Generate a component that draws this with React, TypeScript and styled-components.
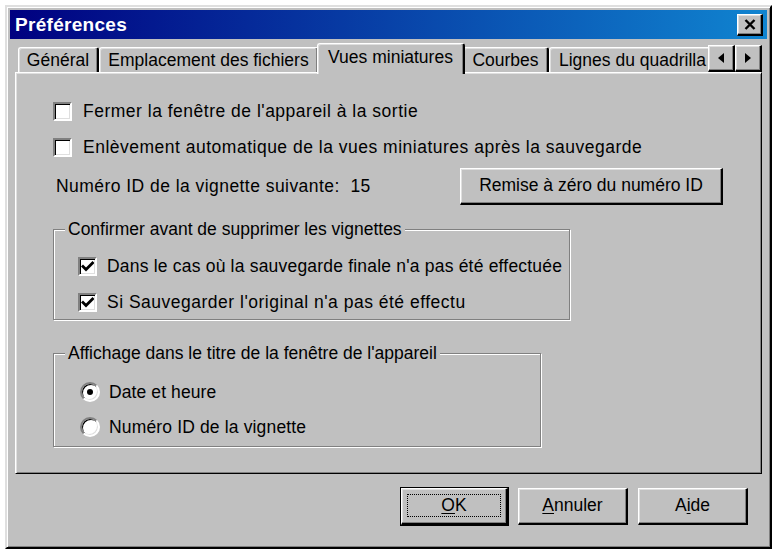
import styled, { createGlobalStyle } from 'styled-components';

const GlobalStyle = createGlobalStyle`
  html, body {
    margin: 0;
    padding: 0;
    background: #fff;
  }
  body {
    font-family: "Liberation Sans", Arial, sans-serif;
    font-size: 17.5px;
    color: #000;
  }
`;

const tabs = [
  { label: 'Général', width: 81 },
  { label: 'Emplacement des fichiers', width: 220 },
  { label: 'Vues miniatures', width: 144, active: true },
  { label: 'Courbes', width: 86 },
  { label: 'Lignes du quadrilla', width: 200, clipped: true },
];

function CheckBox({ checked }: { checked?: boolean }) {
  return (
    <Box>
      {checked && (
        <svg width="13" height="13" viewBox="0 0 13 13">
          <path d="M2 6.5 L5 9.5 L11.5 3" stroke="#000" strokeWidth="2.8" fill="none" strokeLinecap="square" />
        </svg>
      )}
    </Box>
  );
}

function Radio({ checked }: { checked?: boolean }) {
  return <RadioCircle>{checked && <RadioDot />}</RadioCircle>;
}

function App() {
  return (
    <>
      <GlobalStyle />
      <Window>
        <TitleBar>
          <Title>Préférences</Title>
          <CloseButton>
            <svg width="12" height="11" viewBox="0 0 12 11">
              <path d="M1.5 1 L10.5 10 M10.5 1 L1.5 10" stroke="#000" strokeWidth="2.4" />
            </svg>
          </CloseButton>
        </TitleBar>

        <Body>
          <TabStrip>
            <TabList>
              {tabs.map((t) => (
                <Tab key={t.label} $width={t.width} $active={t.active} $clipped={t.clipped}>
                  {t.label}
                </Tab>
              ))}
            </TabList>
            <Arrows>
              <ArrowButton>
                <svg width="6" height="10" viewBox="0 0 6 10">
                  <polygon points="6,0 6,10 0,5" fill="#000" />
                </svg>
              </ArrowButton>
              <ArrowButton>
                <svg width="6" height="10" viewBox="0 0 6 10">
                  <polygon points="0,0 0,10 6,5" fill="#000" />
                </svg>
              </ArrowButton>
            </Arrows>
          </TabStrip>

          <Panel>
            <OptionRow $gap={11}>
              <CheckBox />
              <Label>Fermer la fenêtre de l'appareil à la sortie</Label>
            </OptionRow>
            <OptionRow $gap={11}>
              <CheckBox />
              <Label>Enlèvement automatique de la vues miniatures après la sauvegarde</Label>
            </OptionRow>
            <IdRow>
              <IdLabel>Numéro ID de la vignette suivante:&nbsp;&nbsp;15</IdLabel>
              <Button $width={263}>Remise à zéro du numéro ID</Button>
            </IdRow>

            <GroupBox $width={517} $top={14}>
              <Legend>Confirmer avant de supprimer les vignettes</Legend>
              <GroupBody $pad="9px 0 0 24px" $gap={2}>
                <OptionRow $gap={10} $h={34}>
                  <CheckBox checked />
                  <Label $spacing={0.2}>Dans le cas où la sauvegarde finale n'a pas été effectuée</Label>
                </OptionRow>
                <OptionRow $gap={10} $h={34}>
                  <CheckBox checked />
                  <Label>Si Sauvegarder l'original n'a pas été effectu</Label>
                </OptionRow>
              </GroupBody>
            </GroupBox>

            <GroupBox $width={488} $top={23}>
              <Legend>Affichage dans le titre de la fenêtre de l'appareil</Legend>
              <GroupBody $pad="11px 0 2px 26px" $gap={1}>
                <OptionRow $gap={9} $h={34}>
                  <Radio checked />
                  <Label $spacing={0.1}>Date et heure</Label>
                </OptionRow>
                <OptionRow $gap={9} $h={34}>
                  <Radio />
                  <Label $spacing={0.15}>Numéro ID de la vignette</Label>
                </OptionRow>
              </GroupBody>
            </GroupBox>
          </Panel>

          <Footer>
            <DefaultButton $width={107}>
              <FocusRing>
                <Mnemonic>O</Mnemonic>K
              </FocusRing>
            </DefaultButton>
            <Button $width={110}>
              <Mnemonic>A</Mnemonic>nnuler
            </Button>
            <Button $width={110}>
              A<Mnemonic>i</Mnemonic>de
            </Button>
          </Footer>
        </Body>
      </Window>
    </>
  );
}

const Window = styled.div`
  box-sizing: border-box;
  width: 767px;
  height: 544px;
  margin: 5px 0 0 5px;
  padding: 3px;
  background: #c0c0c0;
  border: 2px solid;
  border-color: #dfdfdf #000 #000 #dfdfdf;
  box-shadow: inset 1px 1px #fff, inset -1px -1px #808080;
  display: flex;
  flex-direction: column;
`;

const TitleBar = styled.div`
  height: 29px;
  display: flex;
  align-items: center;
  justify-content: space-between;
  padding: 0 4px 0 5px;
  background: linear-gradient(to right, #000080, #1084d0);
`;

const Title = styled.span`
  color: #fff;
  font-weight: bold;
  font-size: 19px;
  letter-spacing: 0.3px;
`;

const raised = `
  border-style: solid;
  border-width: 1px 2px 2px 1px;
  border-color: #fff #000 #000 #fff;
  box-shadow: inset -1px -1px #808080, inset 1px 1px #dfdfdf;
  background: #c0c0c0;
`;

const CloseButton = styled.div`
  box-sizing: border-box;
  width: 26px;
  height: 22px;
  ${raised}
  display: flex;
  align-items: center;
  justify-content: center;
`;

const Body = styled.div`
  flex: 1;
  display: flex;
  flex-direction: column;
  padding: 4px 5px 0;
`;

const TabStrip = styled.div`
  display: flex;
  height: 31px;
  margin-bottom: -2px;
  position: relative;
  z-index: 1;
`;

const TabList = styled.div`
  flex: 1;
  display: flex;
  align-items: flex-end;
  overflow: hidden;
  padding-left: 3px;
`;

const Tab = styled.div<{ $width: number; $active?: boolean; $clipped?: boolean }>`
  flex: none;
  box-sizing: border-box;
  width: ${(p) => (p.$active ? p.$width + 4 : p.$width)}px;
  height: ${(p) => (p.$active ? 31 : 25)}px;
  margin: ${(p) => (p.$active ? '0 -2px' : '0 0 2px')};
  position: relative;
  z-index: ${(p) => (p.$active ? 2 : 0)};
  background: #c0c0c0;
  border-style: solid;
  border-width: 1px 2px 0 1px;
  border-color: #fff #000 #000 #fff;
  border-radius: 3px 3px 0 0;
  box-shadow: inset -1px 0 #808080, inset 1px 1px #dfdfdf;
  display: flex;
  align-items: center;
  justify-content: ${(p) => (p.$clipped ? 'flex-start' : 'center')};
  padding-left: ${(p) => (p.$clipped ? 9 : 0)}px;
  padding-bottom: ${(p) => (p.$active ? 3 : 0)}px;
  white-space: nowrap;
`;

const Arrows = styled.div`
  display: flex;
  margin-top: 2px;
  height: 27px;
`;

const ArrowButton = styled.div`
  box-sizing: border-box;
  width: 27px;
  height: 27px;
  ${raised}
  display: flex;
  align-items: center;
  justify-content: center;
`;

const Panel = styled.div`
  box-sizing: border-box;
  height: 402px;
  padding: 20px 38px 0 37px;
  background: #c0c0c0;
  border: 1px solid;
  border-color: #fff #000 #000 #fff;
  box-shadow: inset 1px 1px #dfdfdf, inset -1px -1px #808080;
  display: flex;
  flex-direction: column;
`;

const OptionRow = styled.div<{ $gap: number; $h?: number }>`
  display: flex;
  align-items: center;
  height: ${(p) => p.$h ?? 36}px;
  gap: ${(p) => p.$gap}px;
  white-space: nowrap;
`;

const Label = styled.span<{ $spacing?: number }>`
  letter-spacing: ${(p) => p.$spacing ?? 0.5}px;
`;

const Box = styled.span`
  flex: none;
  box-sizing: border-box;
  width: 19px;
  height: 19px;
  background: #fff;
  border: 2px solid;
  border-color: #808080 #fff #fff #808080;
  box-shadow: inset 1px 1px #000, inset -1px -1px #dfdfdf;
  display: flex;
  align-items: center;
  justify-content: center;
`;

const RadioCircle = styled.span`
  flex: none;
  box-sizing: border-box;
  width: 20px;
  height: 20px;
  border-radius: 50%;
  background: #fff;
  border: 2px solid;
  border-color: #808080 #fff #fff #808080;
  box-shadow: inset 1px 1px #000, inset -1px -1px #dfdfdf;
  display: flex;
  align-items: center;
  justify-content: center;
`;

const RadioDot = styled.span`
  width: 6px;
  height: 6px;
  border-radius: 50%;
  background: #000;
`;

const IdRow = styled.div`
  display: flex;
  align-items: center;
  justify-content: space-between;
  margin-top: 3px;
`;

const IdLabel = styled.span`
  margin-left: 3px;
  letter-spacing: 0.45px;
`;

const Button = styled.div<{ $width: number }>`
  box-sizing: border-box;
  width: ${(p) => p.$width}px;
  height: 37px;
  ${raised}
  display: flex;
  align-items: center;
  justify-content: center;
  padding-bottom: 2px;
`;

const DefaultButton = styled(Button)`
  outline: 1px solid #000;
  outline-offset: 0;
  padding: 5px 5px 6px;
`;

const FocusRing = styled.span`
  flex: 1;
  align-self: stretch;
  border: 1px dotted #000;
  display: flex;
  align-items: center;
  justify-content: center;
`;

const Mnemonic = styled.span`
  text-decoration: underline;
  text-underline-offset: 2px;
`;

const GroupBox = styled.fieldset<{ $width: number; $top: number }>`
  box-sizing: border-box;
  width: ${(p) => p.$width}px;
  margin: ${(p) => p.$top}px 0 0;
  padding: 0;
  min-width: 0;
  border: 1px solid #808080;
  box-shadow: 1px 1px 0 #fff, inset 1px 1px 0 #fff;
`;

const Legend = styled.legend`
  margin-left: 11px;
  padding: 0 3px;
  line-height: 21px;
  background: #c0c0c0;
`;

const GroupBody = styled.div<{ $pad: string; $gap: number }>`
  display: flex;
  flex-direction: column;
  padding: ${(p) => p.$pad};
  gap: ${(p) => p.$gap}px;
`;

const Footer = styled.div`
  display: flex;
  justify-content: flex-end;
  gap: 10px;
  margin-top: 14px;
  padding-right: 14px;
`;

export default App;
